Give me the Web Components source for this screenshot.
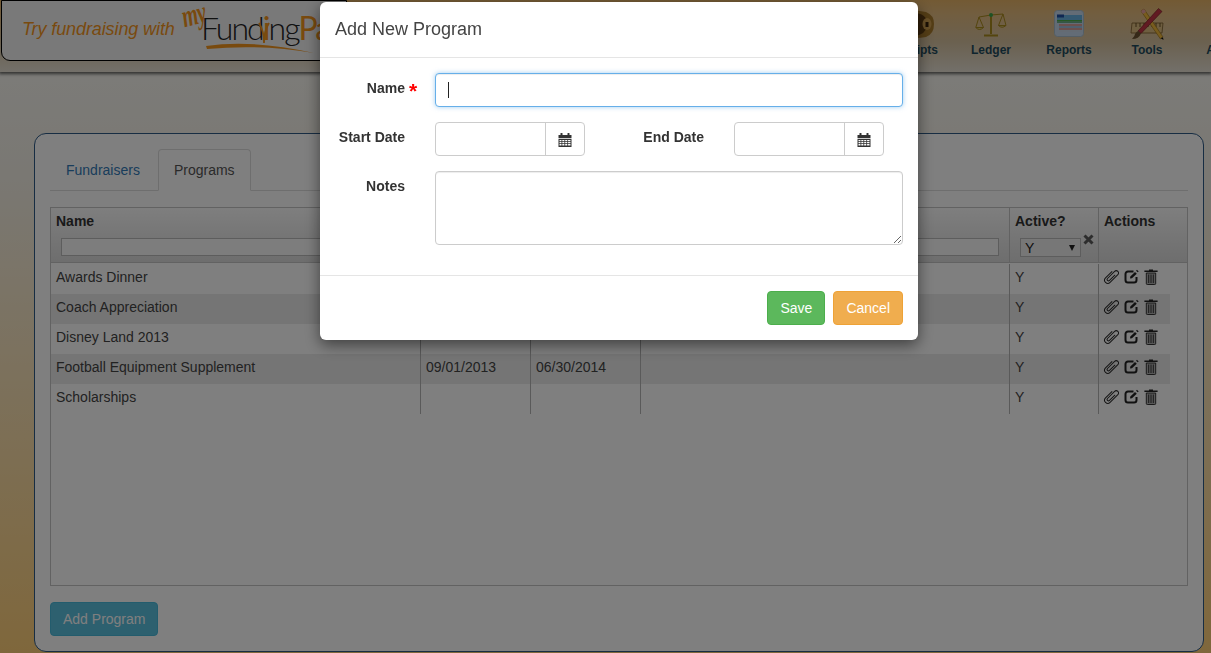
<!DOCTYPE html>
<html lang="en"><head><meta charset="utf-8"><title>Add New Program</title>
<style>
html,body{margin:0;padding:0;height:653px;overflow:hidden}
body{font:14px/20px "Liberation Sans",Arial,sans-serif;color:#333;background:linear-gradient(#fbfbf8 0,#f4f0e6 180px,#ffcf78 653px)}
</style></head>
<body>
<app-shell>
  <app-header>
    <fund-logo></fund-logo>
    <nav-item label="Receipts" icon="box"></nav-item>
    <nav-item label="Ledger" icon="scales"></nav-item>
    <nav-item label="Reports" icon="reports"></nav-item>
    <nav-item label="Tools" icon="tools"></nav-item>
    <nav-item label="Admin" icon="none"></nav-item>
  </app-header>
  <main-panel>
    <tab-bar></tab-bar>
    <program-grid></program-grid>
    <info-button>Add Program</info-button>
  </main-panel>
</app-shell>
<modal-backdrop></modal-backdrop>
<program-dialog></program-dialog>
<script>
function def(name, css, html, init){
  customElements.define(name, class extends HTMLElement{
    connectedCallback(){
      if(this.shadowRoot) return;
      const r=this.attachShadow({mode:'open'});
      r.innerHTML='<style>'+css+'</style>'+(typeof html==='function'?html(this):html);
      if(init) init(r,this);
    }
  });
}
const ICONS={
box:`<svg width="46" height="30" viewBox="0 0 46 30"><path d="M6 5 Q20-1 36 3 Q44 6 44 15 Q44 25 36 28 Q20 31 6 25Z" fill="#a97b2c"/><path d="M24 4 Q36 4 38 15 Q36 26 24 27 Q32 15 24 4Z" fill="#5e3c12"/><ellipse cx="37" cy="15" rx="4.500" ry="6" fill="#d0a050"/><rect x="35.500" y="13" width="3" height="5" fill="#38220a"/></svg>`,
scales:`<svg width="32" height="26" viewBox="0 0 32 26"><g fill="none" stroke="#a98a1c" stroke-width="1"><path d="M16 3V23" stroke-width="2"/><path d="M9 24.500H23" stroke-width="2"/><path d="M4 6 L16 4 L28 3"/><path d="M4 6 L0.800 16.500 M4 6 L8.500 16.500 M28 3 L23.500 14.500 M28 3 L31 14.500"/><path d="M0.800 16.500 Q4.500 20.500 8.500 16.500Z M23.500 14.500 Q27 18 31 14.500Z" fill="#d4c070"/></g><circle cx="16" cy="4" r="2" fill="#3da54a"/></svg>`,
reports:`<svg width="30" height="27" viewBox="0 0 30 27"><rect x=".5" y=".5" width="29" height="26" rx="3" fill="#c6d9ec" stroke="#a9bccb"/><rect x="3" y="5" width="25" height="5" fill="#69b2e2"/><rect x="3" y="4.500" width="7" height="3" fill="#1f4fa5"/><rect x="3" y="10" width="25" height="1.400" fill="#4db04a"/><rect x="3" y="11.600" width="25" height="1" fill="#2c8f4a"/><g fill="#e56a4f"><rect x="5" y="14.500" width="23" height="1"/><rect x="5" y="18.500" width="23" height="1"/></g><rect x="5" y="16.500" width="23" height="1" fill="#79a9cf"/><rect x="5" y="20.500" width="23" height="1" fill="#c9d6e2"/></svg>`,
tools:`<svg width="34" height="32" viewBox="0 0 34 32"><path d="M2 15 L33 15 L32 25 L1 25Z" fill="#dcbc80" stroke="#7a5c2a" stroke-width=".8"/><path d="M6 15v4M10 15v4M14 15v4M18 15v4M22 15v4M26 15v4M30 15v4" stroke="#5c431a" stroke-width=".9"/><path d="M11 3 L14 1 L33 29 L30.500 31Z" fill="#f0b93c" stroke="#8f6a12" stroke-width=".6"/><path d="M11 3 L14 1 L16 4 L13 6Z" fill="#e8a0a0"/><path d="M30.500 30 L33 29.500 L33.500 32Z" fill="#111"/><path d="M28.500 .5 L32 3.500 L11 25.500 L8 23Z" fill="#c23444" stroke="#6f1822" stroke-width=".6"/><path d="M8 23 L11 25.500 Q9 31 2 31 Q5 28 5 26Q6 24 8 23Z" fill="#6d5330"/></svg>`,
none:`<svg width="30" height="27"></svg>`};
const CAL=`<svg width="14" height="14" viewBox="0 0 14 14" fill="#333"><rect x="2.500" y="0" width="2" height="2.500" rx=".5"/><rect x="9.500" y="0" width="2" height="2.500" rx=".5"/><path d="M.5 2H13.500V5H.5Z"/><path d="M.5 5.700H13.500V14H.5ZM1.500 7V8.300H3.500V7ZM4.300 7V8.300H6.400V7ZM7.200 7V8.300H9.300V7ZM10.100 7V8.300H12.500V7ZM1.500 9V10.200H3.500V9ZM4.300 9V10.200H6.400V9ZM7.200 9V10.200H9.300V9ZM10.100 9V10.200H12.500V9ZM1.500 11V12.600H3.500V11ZM4.300 11V12.600H6.400V11ZM7.200 11V12.600H9.300V11ZM10.100 11V12.600H12.500V11Z" fill-rule="evenodd"/></svg>`;
const CLIP=`<svg width="16" height="16" viewBox="0 0 16 16" fill="none" stroke="#2a2a2a" stroke-width="1" stroke-linecap="round"><g transform="rotate(45 8 8)"><path d="M4.800 3.500V12.500A3.200 3.200 0 0 0 11.200 12.500V1.500A2.300 2.300 0 0 0 6.600 1.500V11.500A1.400 1.400 0 0 0 9.400 11.500V4"/></g></svg>`;
const EDIT=`<svg width="15" height="15" viewBox="0 0 15 15" fill="none" stroke="#222"><path d="M9.500 2.500H4A2.500 2.500 0 0 0 1.500 5V11A2.500 2.500 0 0 0 4 13.500H10A2.500 2.500 0 0 0 12.500 11V8" stroke-width="2"/><path d="M6 9.500 L6.300 7.600 L11 3 L12.800 4.700 L8 9.200Z" fill="#222" stroke="none"/><path d="M12.500 1.200 L14.200 2.900" stroke-width="1.300"/></svg>`;
const TRASH=`<svg width="14" height="16" viewBox="0 0 14 16"><path d="M5 .5H9V1.500H13.600V3H.4V1.500H5Z" fill="#222"/><path d="M2.300 4H11.700V14.500Q11.700 15.500 10.700 15.500H3.300Q2.300 15.500 2.300 14.500Z" fill="#b0b0b0" stroke="#222" stroke-width=".9"/><path d="M4.700 5.500V14M7 5.500V14M9.300 5.500V14" stroke="#222" stroke-width=".9"/></svg>`;

def('app-shell',':host{display:block}','<slot></slot>');

def('app-header',`:host{display:flex;height:72px;overflow:hidden;box-sizing:border-box;
  background:linear-gradient(#e6b468 0,#e4bc80 14px,#d6c2a0 42px,#e6e0d4 72px);box-shadow:0 1px 3px 1px rgba(0,0,0,.6);position:relative}
  ::slotted(fund-logo){margin-right:527px;flex:none}`,'<slot></slot>');

def('fund-logo',`:host{display:block;box-sizing:border-box;position:relative;width:346px;height:61px;margin-left:1px;border:1px solid #000;border-radius:0 0 9px 9px;background:#f2f2f2;overflow:hidden}
 .try{position:absolute;left:20px;top:17px;font:italic 18px/22px "Liberation Sans",Arial,sans-serif;color:#f2951c;white-space:nowrap;letter-spacing:-.1px}
 .my{position:absolute;left:180px;top:6px;font:italic bold 30px/20px "Liberation Serif",serif;color:#f2951c;letter-spacing:-1px;transform-origin:0 50%;transform:rotate(-14deg) scale(.68,1.05)}
 .fp{position:absolute;left:199px;top:7px;font:300 32px/40px Lato,sans-serif;letter-spacing:-1.950px;color:#222;white-space:nowrap}
 .fp b{font-weight:400;color:#f2951c}
 svg{position:absolute}
 .sw{left:200px;top:40px}
 .man{left:256px;top:15px}`,
 `<span class="try">Try fundraising with</span><span class="my">my</span>
  <span class="fp">Fund<b>i</b>ng<b>Pal</b></span>
  <svg class="man" width="12" height="28" viewBox="0 0 12 28" fill="none" stroke="#f2951c" stroke-width="1.800"><path d="M1 7 Q6 15 6 27 M11 7 Q6 15 6 27"/></svg>
  <svg class="sw" width="120" height="16" viewBox="0 0 120 16"><path d="M4 5 Q50 -2 112 12 Q60 3 5 8Z" fill="#f2951c"/></svg>`);

def('nav-item',`:host{display:flex;flex:none;width:78px;flex-direction:column;align-items:center;font:bold 12px/14px "Liberation Sans",Arial,sans-serif;color:#1f4a5c}
 .i{height:37px;margin-top:5px;margin-bottom:1px;display:flex;align-items:center;justify-content:center}
 span{white-space:nowrap}`,
 h=>`<div class="i">${ICONS[h.getAttribute('icon')]}</div><span>${h.getAttribute('label')}</span>`);

def('main-panel',`:host{display:flex;flex-direction:column;box-sizing:border-box;height:519px;margin:61px 7px 0 34px;padding:15px;background:#fff;border:1px solid #2f5a86;border-radius:12px}
 ::slotted(program-grid){flex:1;margin:16px 0}`,'<slot></slot>');

def('tab-bar',`:host{display:flex;height:42px;box-sizing:border-box;border-bottom:1px solid #ddd;flex:none}
 a{display:block;box-sizing:border-box;height:42px;padding:10px 15px;margin-right:2px;border:1px solid transparent;color:#337ab7;text-decoration:none}
 a:first-child{margin-right:1px}
 a.on{color:#555;background:#fff;border-color:#ddd #ddd transparent;border-radius:4px 4px 0 0}`,
 `<a>Fundraisers</a><a class="on">Programs</a>`);

const ROWS=[['Awards Dinner','','','','Y'],['Coach Appreciation','','','','Y'],['Disney Land 2013','','','','Y'],['Football Equipment Supplement','09/01/2013','06/30/2014','','Y'],['Scholarships','','','','Y']];
def('program-grid',`:host{display:block;box-sizing:border-box;border:1px solid #c4c4c4;background:#fff}
 .hd,.row{display:grid}
 .hd{grid-template-columns:370px 110px 110px 369px 89px 88px;height:55px;background:linear-gradient(#fdfdfd,#dcdcdc);border-bottom:1px solid #c4c4c4;box-sizing:border-box}
 .hd>div{box-sizing:border-box;border-right:1px solid #c4c4c4;padding:3px 5px 0;font-weight:bold;color:#333;position:relative}
 .hd>div:last-child{border-right:0}
 .hd .f{display:block;box-sizing:border-box;height:18px;margin:7px 5px 0;border:1px solid #bbb;background:#fafafa}
 .sel{display:flex;justify-content:space-between;align-items:center;box-sizing:border-box;width:61px;height:19px;margin:7px 0 0 5px;padding:1px 5px 0 4px;border:1px solid #bbb;background:#efefef;font-weight:normal;line-height:17px;color:#222}
 .sel i{width:0;height:0;border:3.500px solid transparent;border-top:6px solid #222;border-bottom:0}
 .x{position:absolute;left:73px;top:26px;display:block}
 .body{padding-top:1px}
 .row{grid-template-columns:370px 110px 110px 369px 89px 71px;height:30px;width:1119px}
 .row:nth-child(even){background:#ebebeb}
 .row>div{box-sizing:border-box;border-right:1px solid #b4b4b4;padding:3px 5px 0;color:#444;white-space:nowrap}
 .row>div:last-child{border-right:0;display:flex;gap:5px;padding:5px 0 0 4px;align-items:flex-start}
 .row svg{flex:none}`,
 ()=>`<div class="hd"><div>Name<span class="f"></span></div><div>Start Date</div><div>End Date</div><div>Description<span class="f"></span></div>
   <div>Active?<div class="sel"><span>Y</span><i></i></div><svg class="x" width="11" height="11" viewBox="0 0 11 11"><path d="M1.500 1.500 9.500 9.500M9.500 1.500 1.500 9.500" stroke="#5a5a5a" stroke-width="3"/></svg></div><div>Actions</div></div>
  <div class="body">${ROWS.map(r=>`<div class="row">${r.map(c=>`<div>${c}</div>`).join('')}<div>${CLIP}${EDIT}${TRASH}</div></div>`).join('')}</div>`);

def('info-button',`:host{display:inline-block;align-self:flex-start;box-sizing:border-box;height:34px;padding:6px 12px;background:#5bc0de;border:1px solid #46b8da;border-radius:4px;color:#fff;flex:none}`,'<slot></slot>');

def('modal-backdrop',`:host{position:fixed;inset:0;background:rgba(0,0,0,.5);display:block}`,'');

def('date-group',`:host{display:flex;box-sizing:border-box;width:150px;height:34px;border:1px solid #ccc;border-radius:4px;background:#fff}
 input{flex:1;min-width:0;border:0;background:none;outline:0;padding:0 12px;border-radius:4px;font:inherit}
 span{width:39px;flex:none;border-left:1px solid #ccc;display:flex;align-items:center;justify-content:center;padding:1px 1px 0 0;box-sizing:border-box}`,
 ()=>`<input type="text"><span>${CAL}</span>`);

def('name-input',`:host{display:grid;height:34px}
 input,.c{grid-area:1/1}
 input{box-sizing:border-box;width:100%;height:34px;border:1px solid #66afe9;border-radius:4px;outline:0;padding:0 12px;font:inherit;background:#fff;box-shadow:inset 0 1px 1px rgba(0,0,0,.075),0 0 5px rgba(102,175,233,.6)}
 .c{width:1px;height:16px;background:#222;align-self:center;justify-self:start;margin-left:13px;pointer-events:none}`,
 `<input type="text"><i class="c"></i>`);

def('action-button',`:host{display:block;box-sizing:border-box;height:34px;padding:6px 12px;border:1px solid;border-radius:4px;color:#fff;background:var(--bg);border-color:var(--bd)}`,'<slot></slot>');

def('program-dialog',`:host{position:fixed;left:320px;top:2px;width:598px;background:#fff;border-radius:6px;box-shadow:0 5px 15px rgba(0,0,0,.5);display:block;color:#333}
 header{box-sizing:border-box;height:56px;border-bottom:1px solid #e5e5e5;padding:15px 15px 0;font-size:18px;line-height:25px;color:#444}
 .body{padding:15px;display:flex;flex-direction:column;gap:15px;padding-bottom:30px}
 .r{display:grid;column-gap:30px;grid-template-columns:70px 468px}
 .d{grid-template-columns:70px 150px 89px 150px}
 label{padding-top:5px;font-weight:bold;text-align:right;white-space:nowrap;display:flex;justify-content:flex-end;color:#333}
 label.n{position:relative}
 .star{position:absolute;left:74px;top:7px;color:#f00;font-size:21px;line-height:21px;font-weight:bold}
 textarea{box-sizing:border-box;width:468px;height:74px;border:1px solid #ccc;border-radius:4px;padding:6px 12px;font:inherit;outline:0;display:block;resize:both;box-shadow:inset 0 1px 1px rgba(0,0,0,.075)}
 footer{border-top:1px solid #e5e5e5;padding:15px;display:flex;justify-content:flex-end;gap:8px}`,
 `<header>Add New Program</header>
  <div class="body">
   <div class="r"><label class="n">Name<span class="star">*</span></label><name-input></name-input></div>
   <div class="r d"><label>Start Date</label><date-group></date-group><label>End Date</label><date-group></date-group></div>
   <div class="r"><label>Notes</label><textarea></textarea></div>
  </div>
  <footer><action-button style="--bg:#5cb85c;--bd:#4cae4c">Save</action-button><action-button style="--bg:#f0ad4e;--bd:#eea236">Cancel</action-button></footer>`);
</script>
</body></html>
